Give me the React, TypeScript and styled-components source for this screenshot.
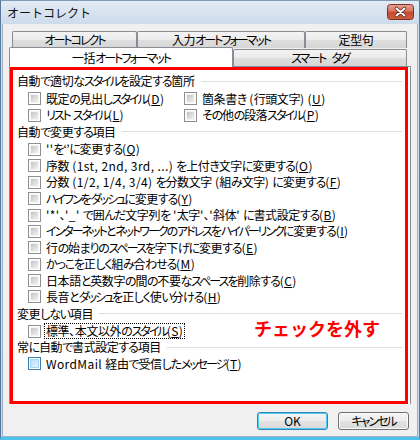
import React from "react";
import styled, { createGlobalStyle } from "styled-components";

const Global = createGlobalStyle`
  html, body { margin: 0; padding: 0; background: #ffffff; }
  body {
    font-family: "Noto Sans CJK JP", "Noto Sans", sans-serif;
    font-size: 12px;
    color: #000;
  }
  * { box-sizing: border-box; }
`;

const Window = styled.div`
  width: 420px;
  height: 440px;
  display: flex;
  flex-direction: column;
  background: linear-gradient(#dbe5f1, #c8d7e9);
  border: 1px solid #55789c;
  border-top-color: #7f9bb8;
  border-bottom: 3px solid #4ec3ec;
`;

const TitleBar = styled.div`
  height: 23px;
  flex: none;
  display: flex;
  align-items: center;
  justify-content: space-between;
  padding: 0 5px 0 6px;
  background: linear-gradient(#e3ebf5, #cddbeb);
`;

const Title = styled.span`
  font-size: 12px;
  line-height: 14px;
  color: #111;
`;

const CloseButton = styled.div`
  width: 27px;
  height: 16px;
  margin-top: -2px;
  display: flex;
`;

const Body = styled.div`
  flex: 1;
  margin: 0 1px;
  display: flex;
  flex-direction: column;
  padding: 7px 6px 6px 6px;
  background: #f0f0f0;
  border: 1px solid #9fb0c4;
  border-top: none;
`;

const TabRow = styled.div<{ $indent: number; $h: number }>`
  display: flex;
  align-items: flex-end;
  height: ${(p) => p.$h}px;
  margin-left: ${(p) => p.$indent}px;
`;

const Tab = styled.div<{ $w: number; $active?: boolean; $h: number }>`
  width: ${(p) => p.$w}px;
  height: ${(p) => p.$h}px;
  display: flex;
  align-items: center;
  justify-content: center;
  border: 1px solid #898c95;
  border-bottom: none;
  font-size: 12px;
  line-height: 14px;
  white-space: pre;
  position: relative;
  z-index: ${(p) => (p.$active ? 2 : 0)};
  margin-bottom: ${(p) => (p.$active ? -1 : 0)}px;
  background: ${(p) =>
    p.$active
      ? "#ffffff"
      : "linear-gradient(#f3f3f3 0%, #ebebeb 50%, #dedede 51%, #d6d6d6 100%)"};
  border-radius: 2px 2px 0 0;
`;

const Panel = styled.div`
  width: 402px;
  height: 338px;
  flex: none;
  background: #ffffff;
  border: 1px solid #898c95;
  border-bottom: none;
  display: flex;
`;

const RedBox = styled.div`
  width: 398px;
  height: 337px;
  border: 3px solid #ff0000;
  display: flex;
  flex-direction: column;
  padding: 2.5px 3px 0 4px;
`;

const Heading = styled.div<{ $h?: number }>`
  height: ${(p) => p.$h ?? 18}px;
  padding-bottom: 1px;
  display: flex;
  align-items: center;
  white-space: pre;
  font-size: 12px;
  line-height: 14px;
  &::after {
    content: "";
    flex: 1;
    height: 1px;
    margin-left: 6px;
    background: #d5dfe5;
  }
`;

const Row = styled.div`
  height: 16.4px;
  display: flex;
  align-items: center;
  padding-left: 11px;
  white-space: pre;
  position: relative;
`;

const TwoCol = styled.div`
  height: 16.4px;
  display: grid;
  grid-template-columns: 156px auto;
  align-items: center;
  padding-left: 11px;
  white-space: pre;
`;

const Item = styled.div`
  display: flex;
  align-items: center;
  gap: 3px;
`;

const Box = styled.span<{ $blue?: boolean }>`
  width: 13px;
  height: 13px;
  flex: none;
  position: relative;
  background: #ffffff;
  border: 1px solid ${(p) => (p.$blue ? "#3c7fb1" : "#8f8f8f")};
  &::after {
    content: "";
    position: absolute;
    inset: 1px;
    border: 1px solid ${(p) => (p.$blue ? "#a9d5f2" : "#f4f4f4")};
    background: ${(p) =>
      p.$blue
        ? "linear-gradient(135deg, #b8def7, #e6f4fd)"
        : "linear-gradient(135deg, #c4c4c4, #f2f2f2)"};
  }
`;

const Label = styled.span<{ $focus?: boolean }>`
  font-size: 12px;
  line-height: 14px;
  padding: 0 1px;
  border: 1px dotted ${(p) => (p.$focus ? "#000" : "transparent")};
  u { text-underline-offset: 1px; }
`;

type RunKind = "kata" | "hira" | "kanji" | "latin";

const spacing: Record<RunKind, string> = {
  kata: "-2px",
  hira: "-1.2px",
  kanji: "-0.4px",
  latin: "0.4px",
};

const Run = styled.span<{ $k: RunKind }>`
  font-feature-settings: ${(p) => (p.$k === "latin" ? "normal" : '"palt"')};
  letter-spacing: ${(p) => spacing[p.$k]};
`;

const Note = styled.span`
  position: absolute;
  left: 237px;
  top: -4px;
  font-size: 18px;
  line-height: 18px;
  font-weight: 700;
  color: #ff0000;
`;

const ButtonRow = styled.div`
  display: flex;
  justify-content: flex-end;
  gap: 10px;
  margin-top: 8px;
  margin-right: 2px;
`;

const Button = styled.div<{ $default?: boolean }>`
  width: 71px;
  height: 18px;
  display: flex;
  align-items: center;
  justify-content: center;
  border-radius: 3px;
  font-size: 12px;
  line-height: 14px;
  border: 1px solid ${(p) => (p.$default ? "#3c7fb1" : "#707070")};
  box-shadow: inset 0 0 0 1px ${(p) => (p.$default ? "#4bd0f6" : "#fafafa")};
  background: linear-gradient(#f4f4f4 0%, #ededed 50%, #e2e2e2 51%, #dadada 100%);
`;

const RUN_RE =
  /([\u30A0-\u30FF]+)|([\u3040-\u309F]+)|([\u3000-\u303F\u4E00-\u9FFF\uFF00-\uFFEF\u2018\u2019]+)|([^\u2018\u2019\u3000-\u9FFF\uFF00-\uFFEF]+)/g;

const Jp: React.FC<{ text: string }> = ({ text }) => {
  const out: React.ReactNode[] = [];
  let m: RegExpExecArray | null;
  let i = 0;
  RUN_RE.lastIndex = 0;
  while ((m = RUN_RE.exec(text))) {
    const k: RunKind = m[1] ? "kata" : m[2] ? "hira" : m[3] ? "kanji" : "latin";
    out.push(
      <Run key={i++} $k={k}>
        {m[0]}
      </Run>
    );
  }
  return <>{out}</>;
};

type Entry = { text: string; key: string };

const changeItems: Entry[] = [
  { text: "''を‘’に変更する", key: "Q" },
  { text: "序数 (1st, 2nd, 3rd, ...) を上付き文字に変更する", key: "O" },
  { text: "分数 (1/2, 1/4, 3/4) を分数文字 (組み文字) に変更する", key: "F" },
  { text: "ハイフンをダッシュに変更する", key: "Y" },
  { text: "'*'、'_' で囲んだ文字列を '太字'、'斜体' に書式設定する", key: "B" },
  { text: "インターネットとネットワークのアドレスをハイパーリンクに変更する", key: "I" },
  { text: "行の始まりのスペースを字下げに変更する", key: "E" },
  { text: "かっこを正しく組み合わせる", key: "M" },
  { text: "日本語と英数字の間の不要なスペースを削除する", key: "C" },
  { text: "長音とダッシュを正しく使い分ける", key: "H" },
];

const Check: React.FC<{ e: Entry; blue?: boolean; focus?: boolean }> = ({ e, blue, focus }) => (
  <Item>
    <Box $blue={blue} />
    <Label $focus={focus}>
      <Jp text={e.text} />
      <Run $k="latin">
        (<u>{e.key}</u>)
      </Run>
    </Label>
  </Item>
);

const CloseIcon = () => (
  <svg width="27" height="16" viewBox="0 0 27 16">
    <defs>
      <linearGradient id="cg" x1="0" y1="0" x2="0" y2="1">
        <stop offset="0" stopColor="#e8a493" />
        <stop offset="0.45" stopColor="#d4765f" />
        <stop offset="0.5" stopColor="#c64a32" />
        <stop offset="1" stopColor="#d0603f" />
      </linearGradient>
    </defs>
    <rect x="0.5" y="0.5" width="26" height="15" rx="3" fill="url(#cg)" stroke="#7b2e22" />
    <path d="M9.5 4.5 L17.5 11.5 M17.5 4.5 L9.5 11.5" stroke="#5a2319" strokeWidth="3.6" strokeLinecap="round" />
    <path d="M9.5 4.5 L17.5 11.5 M17.5 4.5 L9.5 11.5" stroke="#ffffff" strokeWidth="2" strokeLinecap="round" />
  </svg>
);

export default function App() {
  return (
    <>
      <Global />
      <Window>
        <TitleBar>
          <Title>オートコレクト</Title>
          <CloseButton>
            <CloseIcon />
          </CloseButton>
        </TitleBar>
        <Body>
          <TabRow $indent={3} $h={17}>
            <Tab $w={125} $h={17}><Jp text="オートコレクト" /></Tab>
            <Tab $w={168} $h={17}><Jp text="入力オートフォーマット" /></Tab>
            <Tab $w={102} $h={17}><Jp text="定型句" /></Tab>
          </TabRow>
          <TabRow $indent={0} $h={18}>
            <Tab $w={224} $h={20} $active><Jp text="一括オートフォーマット" /></Tab>
            <Tab $w={174} $h={17}><Jp text="スマート  タグ" /></Tab>
          </TabRow>
          <Panel>
            <RedBox>
              <Heading><Jp text="自動で適切なスタイルを設定する箇所" /></Heading>
              <TwoCol>
                <Check e={{ text: "既定の見出しスタイル", key: "D" }} />
                <Check e={{ text: "箇条書き (行頭文字) ", key: "U" }} />
              </TwoCol>
              <TwoCol>
                <Check e={{ text: "リスト スタイル", key: "L" }} />
                <Check e={{ text: "その他の段落スタイル", key: "P" }} />
              </TwoCol>
              <Heading><Jp text="自動で変更する項目" /></Heading>
              {changeItems.map((e) => (
                <Row key={e.key}>
                  <Check e={e} />
                </Row>
              ))}
              <Heading><Jp text="変更しない項目" /></Heading>
              <Row>
                <Check e={{ text: "標準、本文以外のスタイル", key: "S" }} focus />
                <Note>チェックを外す</Note>
              </Row>
              <Heading $h={16}><Jp text="常に自動で書式設定する項目" /></Heading>
              <Row>
                <Check e={{ text: "WordMail 経由で受信したメッセージ", key: "T" }} blue />
              </Row>
            </RedBox>
          </Panel>
          <ButtonRow>
            <Button $default>OK</Button>
            <Button><Jp text="キャンセル" /></Button>
          </ButtonRow>
        </Body>
      </Window>
    </>
  );
}
